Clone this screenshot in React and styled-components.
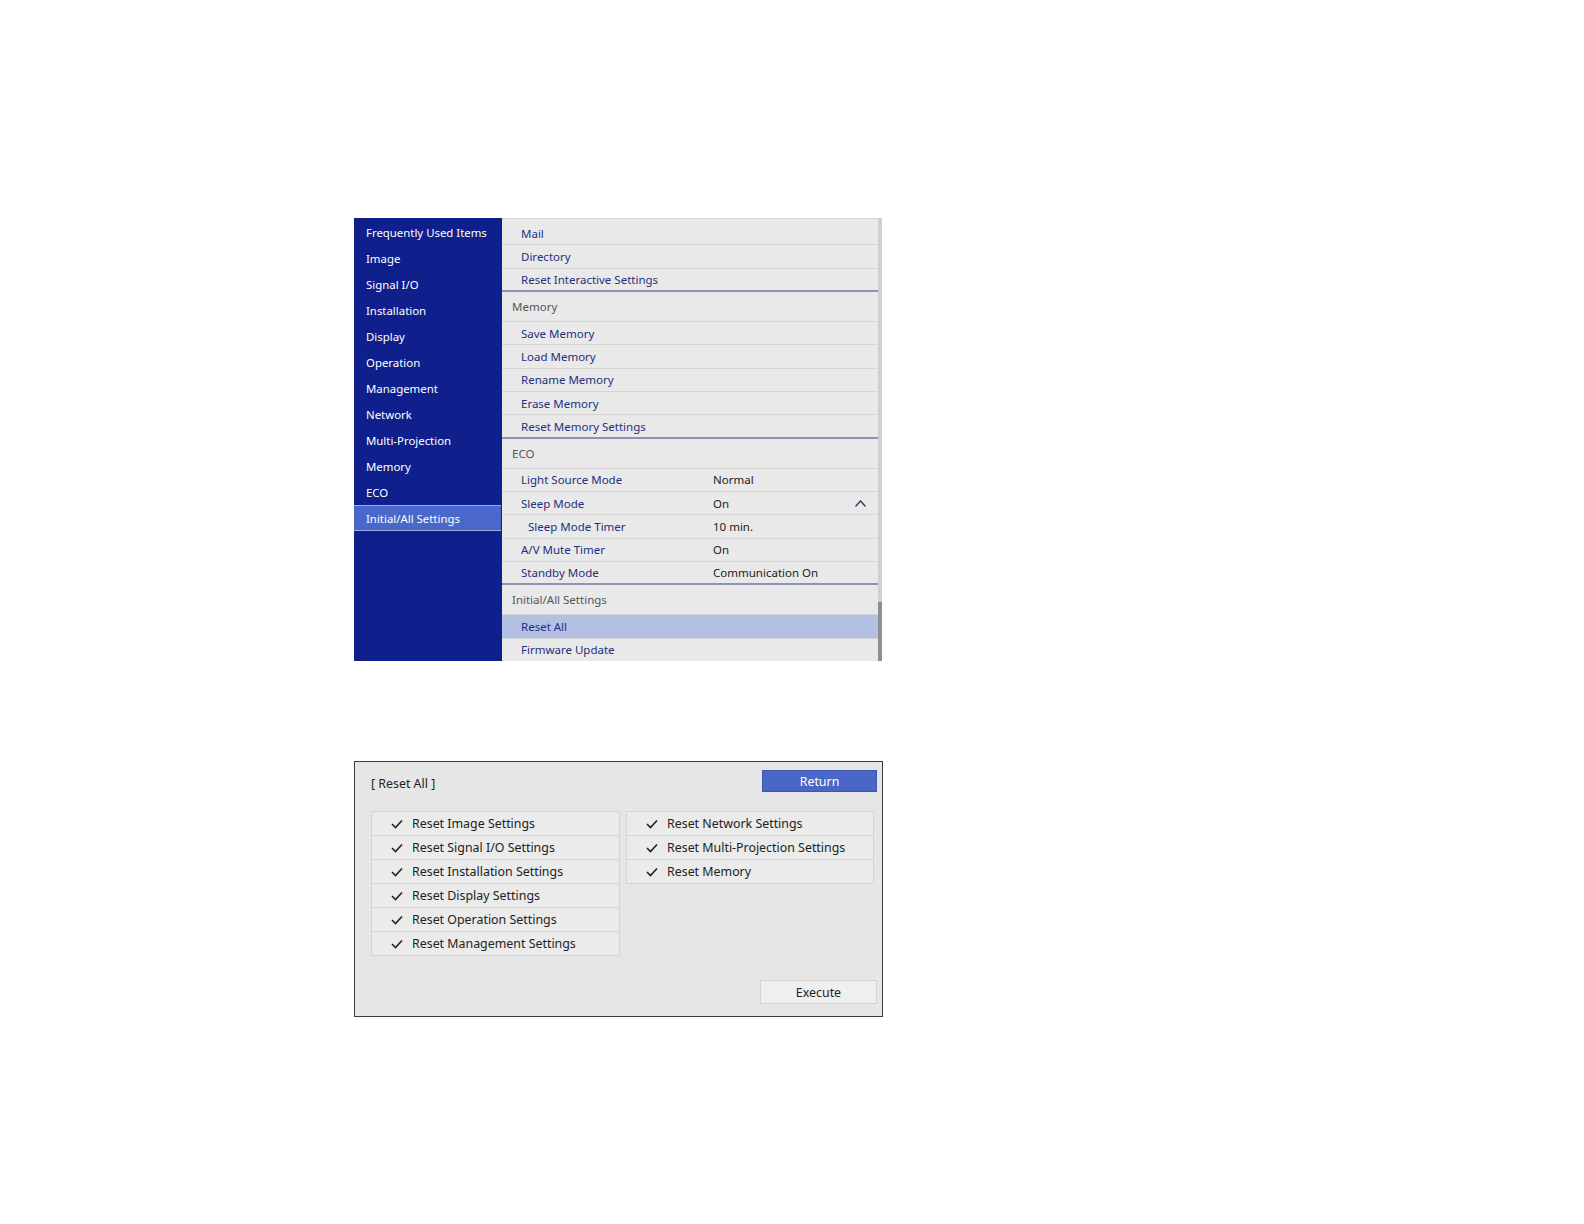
import React from 'react';
import styled, { createGlobalStyle } from 'styled-components';

const GlobalStyle = createGlobalStyle`
  body {
    margin: 0;
    background: #ffffff;
    font-family: "Noto Sans", "Open Sans", sans-serif;
  }
`

const Page = styled.div`
  padding: 218px 0 0 354px;
  display: flex;
  flex-direction: column;
  gap: 100px;
`

const MenuPanel = styled.div`
  width: 528px;
  height: 443px;
  display: flex;
  background: #e9e9e9;
  box-sizing: border-box;
  overflow: hidden;
`

const Sidebar = styled.div`
  width: 148px;
  background: #0f1f8b;
  padding-top: 1px;
  display: flex;
  flex-direction: column;
`

const SideItem = styled.div`
  height: 26px;
  box-sizing: border-box;
  display: flex;
  align-items: center;
  padding-left: 12px;
  margin-right: ${p => (p.$active ? '1px' : '0')};
  font-size: 11.4px;
  color: #ffffff;
  background: ${p => (p.$active ? '#4a67cb' : 'transparent')};
  border-top: 1px solid ${p => (p.$active ? '#9aa8e4' : 'transparent')};
  border-bottom: 1px solid ${p => (p.$active ? '#9aa8e4' : 'transparent')};
`

const ListPane = styled.div`
  flex: 1;
  padding-top: 3px;
  display: flex;
  flex-direction: column;
  border-top: 1px solid #d6d6d6;
`

const Scrollbar = styled.div`
  width: 4px;
  background: #cfcfcf;
  display: flex;
  flex-direction: column;
  justify-content: flex-end;
`

const Thumb = styled.div`
  height: 59px;
  background: #8f8f8f;
`

const Row = styled.div`
  height: 23.35px;
  flex-shrink: 0;
  box-sizing: border-box;
  display: flex;
  align-items: center;
  padding-left: ${p => (p.$sub ? '26px' : '19px')};
  font-size: 11.5px;
  color: #22307f;
  background: ${p => (p.$selected ? '#b3bfe3' : '#e9e9e9')};
  border-bottom: ${p => (p.$last ? '2px solid #8d92b6' : '1px solid #d6d6d6')};
`

const Label = styled.span`
  width: ${p => (p.$sub ? '185px' : '192px')};
  flex-shrink: 0;
`

const Value = styled.span`
  color: #222222;
  flex: 1;
`

const Chevron = styled.svg`
  width: 11px;
  height: 7px;
  margin-right: 12px;
`

const Header = styled.div`
  height: 30px;
  flex-shrink: 0;
  box-sizing: border-box;
  display: flex;
  align-items: center;
  padding-left: 10px;
  font-size: 11.5px;
  color: #555555;
  border-bottom: 1px solid #d6d6d6;
`

const ResetPanel = styled.div`
  width: 529px;
  height: 256px;
  box-sizing: border-box;
  border: 1px solid #3a3a3a;
  background: #e6e6e6;
  padding: 8px 5px 0 16px;
  display: flex;
  flex-direction: column;
`

const TopLine = styled.div`
  display: flex;
  justify-content: space-between;
  align-items: flex-start;
`

const Title = styled.div`
  font-size: 12.4px;
  color: #222222;
  padding-top: 5px;
`

const Button = styled.div`
  width: ${p => (p.$primary ? '115px' : '117px')};
  height: ${p => (p.$primary ? '22px' : '24px')};
  box-sizing: border-box;
  display: flex;
  align-items: center;
  justify-content: center;
  font-size: 12.4px;
  color: ${p => (p.$primary ? '#ffffff' : '#222222')};
  background: ${p => (p.$primary ? '#4a66c7' : '#efefef')};
  border: 1px solid ${p => (p.$primary ? '#3c56b4' : '#d2d2d2')};
`

const Lists = styled.div`
  display: flex;
  gap: 6px;
  margin-top: 19px;
  align-items: flex-start;
`

const CheckList = styled.div`
  width: ${p => p.$w}px;
  border: 1px solid #d4d4d4;
  border-bottom: none;
  display: flex;
  flex-direction: column;
`

const CheckRow = styled.div`
  height: 24px;
  box-sizing: border-box;
  display: flex;
  align-items: center;
  gap: 9px;
  padding-left: 19px;
  background: #ebebeb;
  border-bottom: 1px solid #d4d4d4;
  font-size: 12.4px;
  color: #222222;
`

const Footer = styled.div`
  display: flex;
  justify-content: flex-end;
  margin-top: auto;
  margin-bottom: 12px;
`

const Check = () => (
  <svg width="12" height="10" viewBox="0 0 12 10">
    <polyline points="1,5 4.5,8.5 11,1.5" fill="none" stroke="#222" strokeWidth="1.6" />
  </svg>
)

const sideItems = [
  'Frequently Used Items', 'Image', 'Signal I/O', 'Installation', 'Display',
  'Operation', 'Management', 'Network', 'Multi-Projection', 'Memory', 'ECO',
  'Initial/All Settings',
]

const leftChecks = [
  'Reset Image Settings', 'Reset Signal I/O Settings', 'Reset Installation Settings',
  'Reset Display Settings', 'Reset Operation Settings', 'Reset Management Settings',
]

const rightChecks = ['Reset Network Settings', 'Reset Multi-Projection Settings', 'Reset Memory']

const App = () => (
  <>
    <GlobalStyle />
    <Page>
      <MenuPanel>
        <Sidebar>
          {sideItems.map(item => (
            <SideItem key={item} $active={item === 'Initial/All Settings'}>{item}</SideItem>
          ))}
        </Sidebar>
        <ListPane>
          <Row>Mail</Row>
          <Row>Directory</Row>
          <Row $last>Reset Interactive Settings</Row>
          <Header>Memory</Header>
          <Row>Save Memory</Row>
          <Row>Load Memory</Row>
          <Row>Rename Memory</Row>
          <Row>Erase Memory</Row>
          <Row $last>Reset Memory Settings</Row>
          <Header>ECO</Header>
          <Row><Label>Light Source Mode</Label><Value>Normal</Value></Row>
          <Row>
            <Label>Sleep Mode</Label><Value>On</Value>
            <Chevron viewBox="0 0 11 7">
              <polyline points="0.5,6.5 5.5,1 10.5,6.5" fill="none" stroke="#2a2f5a" strokeWidth="1.2" />
            </Chevron>
          </Row>
          <Row $sub><Label $sub>Sleep Mode Timer</Label><Value>10 min.</Value></Row>
          <Row><Label>A/V Mute Timer</Label><Value>On</Value></Row>
          <Row $last><Label>Standby Mode</Label><Value>Communication On</Value></Row>
          <Header>Initial/All Settings</Header>
          <Row $selected>Reset All</Row>
          <Row>Firmware Update</Row>
        </ListPane>
        <Scrollbar><Thumb /></Scrollbar>
      </MenuPanel>

      <ResetPanel>
        <TopLine>
          <Title>[ Reset All ]</Title>
          <Button $primary>Return</Button>
        </TopLine>
        <Lists>
          <CheckList $w={247}>
            {leftChecks.map(c => <CheckRow key={c}><Check />{c}</CheckRow>)}
          </CheckList>
          <CheckList $w={246}>
            {rightChecks.map(c => <CheckRow key={c}><Check />{c}</CheckRow>)}
          </CheckList>
        </Lists>
        <Footer>
          <Button>Execute</Button>
        </Footer>
      </ResetPanel>
    </Page>
  </>
)

export default App;
